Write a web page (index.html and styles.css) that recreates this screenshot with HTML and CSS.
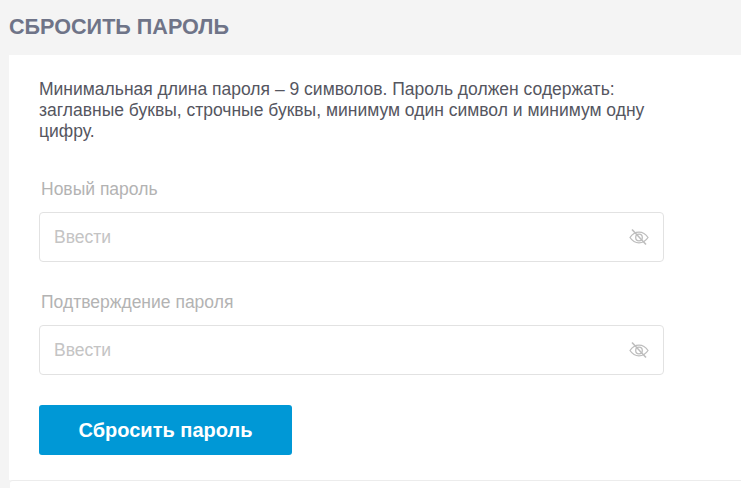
FILE: index.html
```html
<!DOCTYPE html>
<html lang="ru">
<head>
<meta charset="utf-8">
<title>Сбросить пароль</title>
<link rel="stylesheet" href="styles.css">
</head>
<body>
<h1 class="title">СБРОСИТЬ ПАРОЛЬ</h1>
<main class="card">
  <p class="hint">Минимальная длина пароля – 9 символов. Пароль должен содержать: заглавные буквы, строчные буквы, минимум один символ и минимум одну цифру.</p>
  <div class="field">
    <label class="label">Новый пароль</label>
    <div class="input">
      <span class="placeholder">Ввести</span>
      <svg class="eye" viewBox="0 0 20 16" width="20" height="16" fill="none" stroke="#bdbdbd" stroke-width="1.3"><path d="M1 8.500C3.500 4.800 6.500 3.200 10 3.200S16.500 4.800 19 8.500C16.500 12.200 13.500 13.800 10 13.800S3.500 12.200 1 8.500Z"/><circle cx="10" cy="8.500" r="3.300"/><path d="M3 0.500L17 15.500" stroke-width="1.500"/></svg>
    </div>
  </div>
  <div class="field">
    <label class="label">Подтверждение пароля</label>
    <div class="input">
      <span class="placeholder">Ввести</span>
      <svg class="eye" viewBox="0 0 20 16" width="20" height="16" fill="none" stroke="#bdbdbd" stroke-width="1.3"><path d="M1 8.500C3.500 4.800 6.500 3.200 10 3.200S16.500 4.800 19 8.500C16.500 12.200 13.500 13.800 10 13.800S3.500 12.200 1 8.500Z"/><circle cx="10" cy="8.500" r="3.300"/><path d="M3 0.500L17 15.500" stroke-width="1.500"/></svg>
    </div>
  </div>
  <button class="submit" type="button">Сбросить пароль</button>
</main>
<div class="next-card"></div>
</body>
</html>
```
FILE: styles.css
```css
html, body { margin: 0; padding: 0; }
body {
  width: 741px;
  height: 488px;
  overflow: hidden;
  background: #f4f4f4;
  font-family: "Liberation Sans", Arial, sans-serif;
}
.title {
  margin: 0;
  padding: 14px 0 0 9px;
  height: 55px;
  box-sizing: border-box;
  font-size: 21.6px;
  line-height: 26px;
  font-weight: 700;
  color: #6f7488;
}
.card {
  margin-left: 9px;
  height: 425px;
  box-sizing: border-box;
  padding: 24px 0 0 30px;
  background: #fff;
}
.hint {
  margin: 0;
  width: 625px;
  font-size: 17.5px;
  line-height: 21px;
  color: #55565f;
}
.field { width: 625px; margin-top: 37px; }
.field + .field { margin-top: 30px; }
.label {
  display: block;
  padding-left: 2px;
  font-size: 17.5px;
  line-height: 21px;
  color: #b3b3b3;
  margin-bottom: 12px;
}
.input {
  display: flex;
  align-items: center;
  justify-content: space-between;
  height: 50px;
  box-sizing: border-box;
  padding: 0 14px;
  background: #fff;
  border: 1px solid #e2e2e2;
  border-radius: 4px;
}
.placeholder { font-size: 17.5px; color: #c4c4c4; }
.eye { display: block; }
.submit {
  display: block;
  margin-top: 30px;
  width: 253px;
  height: 50px;
  padding: 0;
  border: 0;
  border-radius: 3px;
  background: #0098d6;
  color: #fff;
  font-family: inherit;
  font-size: 20px;
  font-weight: 700;
}
.next-card {
  margin-left: 10px;
  height: 10px;
  background: #fff;
  border-top: 1px solid #ececec;
  border-top-left-radius: 3px;
}
```
